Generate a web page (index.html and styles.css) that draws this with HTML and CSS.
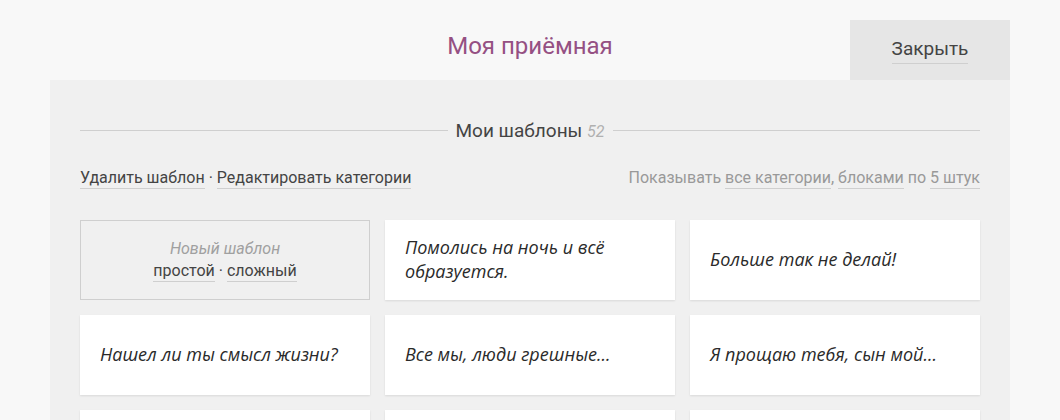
FILE: index.html
```html
<!DOCTYPE html>
<html lang="ru">
<head>
  <meta charset="UTF-8" />
  <meta name="viewport" content="width=device-width, initial-scale=1" />
  <title>Моя приёмная</title>
  <link rel="stylesheet" href="styles.css">
</head>
<body>
  <div class="page">
    <div class="header">
      <div></div>
      <h1 class="title">Моя приёмная</h1>
      <a class="close-btn" href="#"><span class="link">Закрыть</span></a>
    </div>

    <div class="panel">
      <div class="section-title">
        <span class="section-name">Мои шаблоны <em class="count">52</em></span>
      </div>

      <div class="toolbar">
        <div class="actions">
          <a class="link" href="#">Удалить шаблон</a> · <a class="link" href="#">Редактировать категории</a>
        </div>
        <div class="filters">
          Показывать <a class="link" href="#">все категории</a>, <a class="link" href="#">блоками</a> по <a class="link" href="#">5 штук</a>
        </div>
      </div>

      <div class="templates">
        <div class="card card-new">
          <div class="new-label">Новый шаблон</div>
          <div class="new-links"><a class="link" href="#">простой</a> · <a class="link" href="#">сложный</a></div>
        </div>
        <div class="card">Помолись на ночь и всё образуется.</div>
        <div class="card">Больше так не делай!</div>
        <div class="card">Нашел ли ты смысл жизни?</div>
        <div class="card">Все мы, люди грешные...</div>
        <div class="card">Я прощаю тебя, сын мой...</div>
        <div class="card"></div>
        <div class="card"></div>
        <div class="card"></div>
      </div>
    </div>
  </div>
</body>
</html>
```

FILE: styles.css
```css
  body {
    margin: 0;
    background: #f8f8f8;
    font-family: Roboto, "Noto Sans", sans-serif;
    color: #444;
  }
  a {
    color: inherit;
    text-decoration: none;
  }
  .link {
    border-bottom: 1px solid #cfcfcf;
    padding-bottom: 1px;
  }
  .page {
    width: 960px;
    margin: 20px auto 0;
  }
  .header {
    display: grid;
    grid-template-columns: 160px 1fr 160px;
    height: 60px;
  }
  .title {
    margin: 0;
    text-align: center;
    font-weight: normal;
    font-size: 24px;
    line-height: 52px;
    color: #955083;
  }
  .close-btn {
    display: flex;
    align-items: center;
    justify-content: center;
    background: #e6e6e6;
    font-size: 19px;
    color: #444;
  }
  .close-btn .link {
    padding-bottom: 3px;
  }
  .panel {
    background: #f0f0f0;
    padding: 30px 30px 0;
    height: 400px;
  }
  .section-title {
    display: flex;
    align-items: center;
    gap: 8px;
    font-size: 19px;
    color: #444;
    height: 40px;
  }
  .section-title::before,
  .section-title::after {
    content: "";
    flex: 1;
    border-top: 1px solid #cfcfcf;
  }
  .count {
    font-size: 16px;
    color: #b0b0b0;
  }
  .toolbar {
    display: flex;
    justify-content: space-between;
    font-size: 16px;
    margin-top: 18px;
    height: 22px;
  }
  .filters {
    color: #999;
  }
  .templates {
    display: grid;
    grid-template-columns: repeat(3, 1fr);
    grid-auto-rows: 80px;
    gap: 15px;
    margin-top: 30px;
  }
  .card {
    background: #fff;
    box-shadow: 0 1px 2px rgba(0,0,0,0.1);
    display: flex;
    align-items: center;
    padding: 0 16px 3px 20px;
    font-family: "Open Sans", "Noto Sans", sans-serif;
    font-style: italic;
    font-size: 18px;
    line-height: 24px;
    color: #2a2a2a;
  }
  .card-new {
    background: #f0f0f0;
    border: 1px solid #cfcfcf;
    box-shadow: none;
    flex-direction: column;
    justify-content: center;
    padding: 0 20px;
    font-family: Roboto, "Noto Sans", sans-serif;
    font-style: normal;
    text-align: center;
  }
  .new-label {
    font-style: italic;
    font-size: 16px;
    color: #a0a0a0;
    line-height: 22px;
  }
  .new-links {
    font-size: 16px;
    color: #444;
    line-height: 22px;
  }
```
